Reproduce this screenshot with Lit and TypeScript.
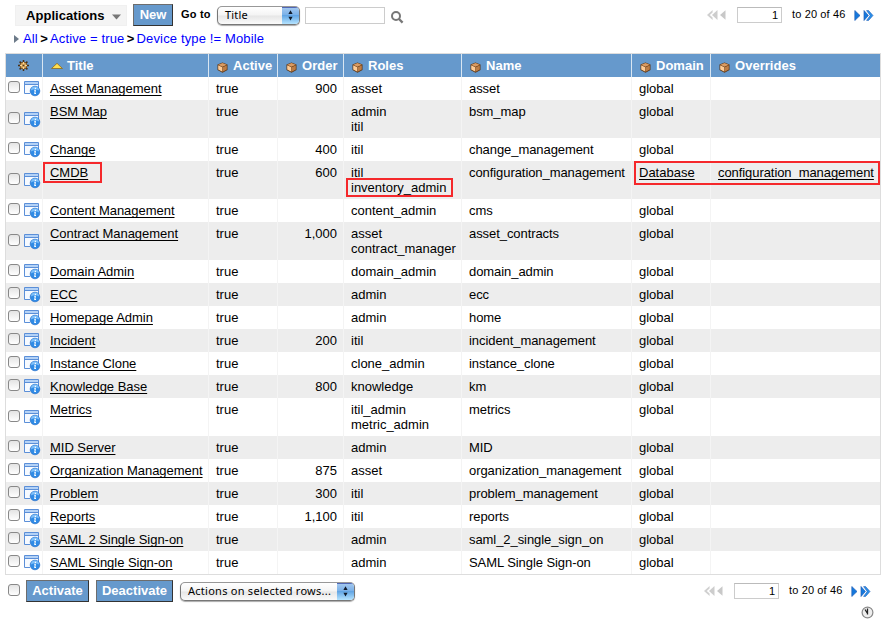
import { LitElement, html, css, nothing } from "lit";
import { customElement, property } from "lit/decorators.js";
import { classMap } from "lit/directives/class-map.js";

interface AppRow {
  title: string;
  order?: string;
  roles: string[];
  name: string;
  domain?: string;
  overrides?: string;
  marked?: boolean;
}

const rows: AppRow[] = [
  { title: "Asset Management", order: "900", roles: ["asset"], name: "asset" },
  { title: "BSM Map", roles: ["admin", "itil"], name: "bsm_map" },
  { title: "Change", order: "400", roles: ["itil"], name: "change_management" },
  { title: "CMDB", order: "600", roles: ["itil", "inventory_admin"], name: "configuration_management", domain: "Database", overrides: "configuration_management", marked: true },
  { title: "Content Management", roles: ["content_admin"], name: "cms" },
  { title: "Contract Management", order: "1,000", roles: ["asset", "contract_manager"], name: "asset_contracts" },
  { title: "Domain Admin", roles: ["domain_admin"], name: "domain_admin" },
  { title: "ECC", roles: ["admin"], name: "ecc" },
  { title: "Homepage Admin", roles: ["admin"], name: "home" },
  { title: "Incident", order: "200", roles: ["itil"], name: "incident_management" },
  { title: "Instance Clone", roles: ["clone_admin"], name: "instance_clone" },
  { title: "Knowledge Base", order: "800", roles: ["knowledge"], name: "km" },
  { title: "Metrics", roles: ["itil_admin", "metric_admin"], name: "metrics" },
  { title: "MID Server", roles: ["admin"], name: "MID" },
  { title: "Organization Management", order: "875", roles: ["asset"], name: "organization_management" },
  { title: "Problem", order: "300", roles: ["itil"], name: "problem_management" },
  { title: "Reports", order: "1,100", roles: ["itil"], name: "reports" },
  { title: "SAML 2 Single Sign-on", roles: ["admin"], name: "saml_2_single_sign_on" },
  { title: "SAML Single Sign-on", roles: ["admin"], name: "SAML Single Sign-on" },
];

const columns = ["Active", "Order", "Roles", "Name", "Domain", "Overrides"];

const boxIcon = html`<svg class="box" width="11" height="11" viewBox="0 0 11 11">
  <path d="M5.5 .4 10.5 2.4V8L5.5 10.7.5 8V2.4z" fill="#5a3412"/>
  <path d="M5.5 1 9.8 2.8 5.5 4.8 1.2 2.8z" fill="#d99a62"/>
  <path d="M1.2 3.3 5.4 5.2V9.8L1.2 7.6z" fill="#ffcb94"/>
  <path d="M9.8 3.3 5.8 5.2V9.8L9.8 7.6z" fill="#bd7c44"/>
</svg>`;

const gearIcon = html`<svg width="11" height="11" viewBox="0 0 11 11">
  <path d="M5.5 0V11M0 5.5H11M1.6 1.6 9.4 9.4M9.4 1.6 1.6 9.4" stroke="#4a3015" stroke-width="1.5"/>
  <circle cx="5.5" cy="5.5" r="3.5" fill="#dca85c" stroke="#5a3a14" stroke-width=".7"/>
  <path d="M5.5 2V9M2 5.5H9" stroke="#ffe0a0" stroke-width=".9"/>
  <circle cx="5.5" cy="5.5" r="1.1" fill="#5b3910"/>
</svg>`;

const infoIcon = html`<svg class="info" width="17" height="16" viewBox="0 0 17 16">
  <path d="M1 1H14V8L7 12H1z" fill="#f6faff"/>
  <path d="M1 1H14V3H1z" fill="#b4d2f6"/>
  <path d="M.5 .5H14.5V7M.5 .5V12.5H6M1 3.5H14" fill="none" stroke="#5b8fd8"/>
  <circle cx="11" cy="10" r="4.8" fill="#2f8be6" stroke="#2a70c8" stroke-width=".7"/>
  <path d="M7 9.4A4 4 0 0 1 15 9.4Q11 7 7 9.4z" fill="#7fc0fa"/>
  <path d="M11.4 6.7V7.9M10.2 9.3H11.3L10.8 12.5H12" stroke="#fff" stroke-width="1.1" fill="none"/>
</svg>`;

const stepper = html`<svg class="stepper" width="17" height="16" viewBox="0 0 17 16">
  <path d="M8.5 2.8 10.6 6.4H6.4zM8.5 12.9 10.6 9.3H6.4z" fill="#111c2c"/>
</svg>`;

@customElement("page-nav")
export class PageNav extends LitElement {
  static styles = css`
    :host { display: flex; align-items: center; height: 18px; font: 11px "Liberation Sans", Arial, sans-serif; }
    .field { box-sizing: border-box; width: 45px; height: 16px; border: 1px solid #ccc; border-top-color: #bbb; margin-left: 11px; padding-right: 3px; line-height: 15px; text-align: right; }
    .range { margin: -2px 0 0 10px; width: 62px; white-space: nowrap; letter-spacing: .14px; }
    svg { display: block; flex: none; }
  `;
  render() {
    return html`
      <svg width="19" height="10" viewBox="0 0 19 10">
        <path d="M5.6 0 0 5 5.6 10V7.6L2.8 5 5.6 2.4z" fill="#d0d0d0"/>
        <path d="M10.5 0 5 5 10.5 10z" fill="#cdcdcd"/>
        <path d="M18.5 0.2 13 5 18.5 9.8z" fill="#c8c8c8"/>
      </svg>
      <div class="field">1</div>
      <div class="range">to 20 of 46</div>
      <svg width="20" height="11" viewBox="0 0 20 11">
        <path d="M.8 .5 6 5.5 .8 10.5z" fill="#1478dc" stroke="#2460b8" stroke-width=".7"/>
        <path d="M10 .5 14.4 5.5 10 10.5z" fill="#1478dc" stroke="#2460b8" stroke-width=".7"/>
        <path d="M12.6 .6H14.6L19 5.5 14.6 10.4H12.6L16.2 5.5z" fill="#2a90ea" stroke="#2460b8" stroke-width=".6"/>
      </svg>`;
  }
}

@customElement("mac-select")
export class MacSelect extends LitElement {
  @property() label = "";
  static styles = css`
    :host { display: flex; box-sizing: border-box; height: 19px; border: 1px solid #777; border-top-color: #989898; border-radius: 5px; overflow: hidden;
      background: linear-gradient(#fff, #f4f4f4 48%, #e6e6e6 52%, #fafafa); font: 11px/16px "Noto Sans", sans-serif; box-shadow: 0 1px 1px #aaa; }
    .text { flex: 1; padding-left: 7px; white-space: nowrap; letter-spacing: var(--track, .2px); }
    .stepper { flex: none; width: 17px; height: 17px; background: linear-gradient(#a7caf0, #7bb1e8 45%, #62a5e4 50%, #b5e4ff); box-shadow: inset 0 1px #5067b5; }
  `;
  render() {
    return html`<div class="text">${this.label}</div>${stepper}`;
  }
}

@customElement("app-root")
export class AppRoot extends LitElement {
  static styles = css`
    :host { display: block; width: 884px; height: 627px; overflow: hidden; background: #fff; color: #000; font: 13px/15px "Liberation Sans", Arial, sans-serif; }
    svg { display: block; flex: none; }
    .top { display: flex; height: 27px; padding: 4px 10px 0 15px; box-sizing: border-box; align-items: flex-start; }
    .apps { display: flex; align-items: center; box-sizing: border-box; width: 112px; height: 21px; margin-top: 1px; padding-left: 10px; background: #f4f4f4; border: 1px solid #f0f0f0; font-weight: bold; letter-spacing: .05px; }
    .apps svg { margin-left: 7px; margin-top: 2px; }
    .btn { box-sizing: border-box; height: 22px; border: 1px solid #333; border-top-color: #6d6d6d; border-left-color: #6d6d6d; background: #69c; color: #fff; font-weight: bold; line-height: 19px; text-align: center; }
    .new { width: 40px; margin-left: 6px; }
    .goto { width: 36px; margin-left: 8px; font-size: 11px; font-weight: bold; line-height: 21px; letter-spacing: .2px; }
    .field-select { width: 83px; margin-top: 2px; }
    .search { box-sizing: border-box; width: 80px; height: 17px; margin: 3px 6px 0 5px; border: 1px solid #ccc; }
    .glass { margin-top: 7px; }
    .top page-nav { margin: 2px 0 0 auto; }
    .crumbs { display: flex; align-items: center; height: 23px; margin-bottom: 3px; padding-left: 14px; color: #00f; white-space: pre; letter-spacing: .14px; }
    .crumbs svg { margin-right: 4px; }
    .crumbs b { color: #000; font-size: 13px; font-weight: bold; margin: 0 2px 0 2.4px; }
    .grid { width: 876px; box-sizing: border-box; margin-left: 5px; border: 1px solid #ddd; }
    .row { display: grid; grid-template-columns: 37px 166px 69px 66px 118px 170px 79px 169px; min-height: 23px; }
    .row.alt { background: #ededed; }
    .cell { box-sizing: border-box; padding: 4px 0 4px 7px; border-right: 1px solid #f4f4f4; white-space: nowrap; }
    .cell:last-child { border-right: 0; }
    .name, .override { letter-spacing: -.07px; }
    .num { text-align: right; padding-right: 6px; }
    .tools { display: flex; align-items: center; padding: 0 0 0 2px; }
    .check { box-sizing: border-box; flex: none; width: 12px; height: 12px; border: 1px solid #888; border-radius: 3px; background: linear-gradient(#e4e4e4, #fff); }
    .tools .check { margin-top: -3px; }
    .info { margin: 1px 0 0 4px; }
    .link { text-decoration: underline; text-decoration-thickness: 1px; text-underline-offset: 2px; text-decoration-skip-ink: none; }
    .title { letter-spacing: -.03px; }
    .head { background: #69c; color: #fff; font-weight: bold; }
    .head .cell { display: flex; align-items: center; padding: 0 0 1px 8px; border-color: #d9e6f2; letter-spacing: 0; }
    .head .cell.gear { padding: 0 0 0 12px; }
    .box { margin: 4px 5px 0 0; }
    .head .label { letter-spacing: .02px; }
    .sort { margin: 1px 4px 0 0; }
    .mark { position: relative; display: block; width: max-content; }
    .mark::after { content: ""; position: absolute; border: 2px solid #f5282b; pointer-events: none; }
    .m-title::after { left: -7px; top: -3px; width: 55px; height: 17px; }
    .m-role::after { left: -5px; top: -2px; width: 103px; height: 15px; }
    .m-domain::after { left: -5px; top: -4px; width: 242px; height: 20px; }
    .bottom { display: flex; height: 29px; padding: 5px 13px 0 8px; }
    .bottom .check { margin: 4px 6px 0 0; }
    .activate { width: 63px; margin-right: 7px; }
    .deactivate { width: 77px; margin-right: 7px; }
    .actions { width: 175px; margin-top: 2px; --track: .26px; }
    .bottom page-nav { margin: 2px 0 0 auto; }
    .foot { display: flex; justify-content: flex-end; padding: 0 10px 0 0; margin-top: -3px; }
  `;

  private rowView(r: AppRow, i: number) {
    return html`<div class=${classMap({ row: true, alt: i % 2 === 1 })}>
      <div class="cell tools"><span class="check"></span>${infoIcon}</div>
      <div class="cell title"><span class=${classMap({ link: true, mark: !!r.marked, "m-title": !!r.marked })}>${r.title}</span></div>
      <div class="cell">true</div>
      <div class="cell num">${r.order ?? nothing}</div>
      <div class="cell">${r.roles.map((role, n) => html`<div class=${classMap({ mark: !!r.marked && n === 1, "m-role": !!r.marked && n === 1 })}>${role}</div>`)}</div>
      <div class="cell name">${r.name}</div>
      <div class="cell"><span class=${classMap({ link: !!r.domain, mark: !!r.marked, "m-domain": !!r.marked })}>${r.domain ?? "global"}</span></div>
      <div class="cell override">${r.overrides ? html`<span class="link">${r.overrides}</span>` : nothing}</div>
    </div>`;
  }

  render() {
    return html`
      <div class="top">
        <div class="apps">Applications<svg width="9" height="6" viewBox="0 0 9 6"><path d="M0 .5H9L4.5 5.5z" fill="#777"/></svg></div>
        <div class="btn new">New</div>
        <div class="goto">Go to</div>
        <mac-select class="field-select" label="Title"></mac-select>
        <div class="search"></div>
        <svg class="glass" width="13" height="13" viewBox="0 0 13 13"><circle cx="5" cy="5" r="4" fill="none" stroke="#777" stroke-width="2"/><path d="M8 8 11.6 11.6" stroke="#777" stroke-width="2.3"/></svg>
        <page-nav></page-nav>
      </div>
      <div class="crumbs"><svg width="5" height="8" viewBox="0 0 5 8"><path d="M0 0 5 4 0 8z" fill="#6c7a89"/></svg><span>All</span><b>&gt;</b><span>Active = true</span><b>&gt;</b><span>Device type != Mobile</span></div>
      <div class="grid">
        <div class="row head">
          <div class="cell gear">${gearIcon}</div>
          <div class="cell"><svg class="sort" width="12" height="6" viewBox="0 0 12 6"><path d="M6 .3 11.5 5.5H.5z" fill="#ffdf50" stroke="#8a6a20" stroke-width=".8"/></svg><span class="label">Title</span></div>
          ${columns.map((c) => html`<div class="cell">${boxIcon}<span class="label">${c}</span></div>`)}
        </div>
        ${rows.map((r, i) => this.rowView(r, i))}
      </div>
      <div class="bottom">
        <span class="check"></span>
        <div class="btn activate">Activate</div>
        <div class="btn deactivate">Deactivate</div>
        <mac-select class="actions" label="Actions on selected rows..."></mac-select>
        <page-nav></page-nav>
      </div>
      <div class="foot"><svg width="13" height="13" viewBox="0 0 13 13"><circle cx="6.5" cy="6.5" r="5.4" fill="#eee" stroke="#888" stroke-width="1.2"/><path d="M6.5 2.5V8.5M4 3.5 6.5 7.5" stroke="#222" stroke-width="1.3" fill="none"/></svg></div>
    `;
  }
}
